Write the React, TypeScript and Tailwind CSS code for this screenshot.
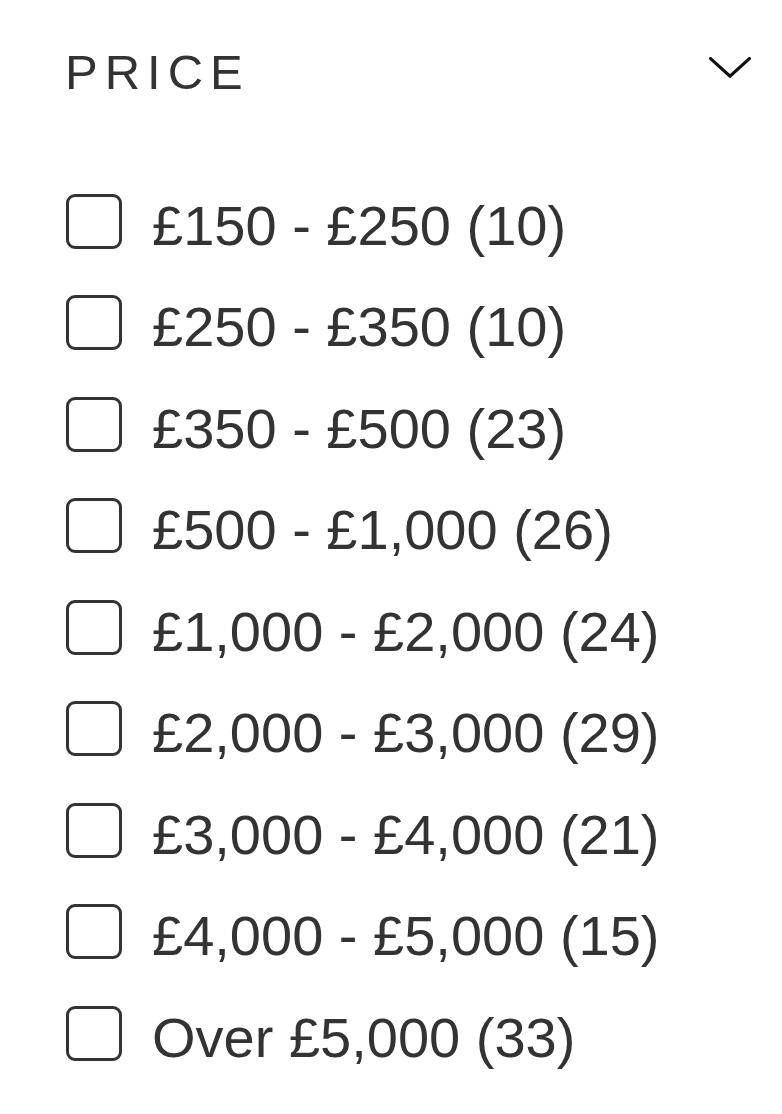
const ranges = [
  { label: '£150 - £250', count: 10 },
  { label: '£250 - £350', count: 10 },
  { label: '£350 - £500', count: 23 },
  { label: '£500 - £1,000', count: 26 },
  { label: '£1,000 - £2,000', count: 24 },
  { label: '£2,000 - £3,000', count: 29 },
  { label: '£3,000 - £4,000', count: 21 },
  { label: '£4,000 - £5,000', count: 15 },
  { label: 'Over £5,000', count: 33 },
];

function Chevron() {
  return (
    <svg width="42" height="21" viewBox="0 0 42 21" fill="none" className="mb-[9px]">
      <polyline
        points="1.6,1.6 21,19.2 40.4,1.6"
        stroke="#111111"
        strokeWidth="3.2"
        strokeLinecap="round"
        strokeLinejoin="miter"
      />
    </svg>
  );
}

export default function App() {
  return (
    <div className="min-h-[1114px] w-[782px] bg-white font-['Liberation_Sans',Arial,sans-serif] text-[#333333]">
      <section className="pl-[65px] pr-[31px] pt-[44px]">
        <button type="button" className="flex w-full items-center justify-between">
          <span className="text-[49px] leading-[56px] tracking-[7px]">PRICE</span>
          <Chevron />
        </button>
        <ul className="mt-[75px]">
          {ranges.map((r) => (
            <li key={r.label} className="flex h-[101.5px] items-center">
              <label className="flex items-center">
                <span className="mb-[9px] ml-[1px] h-[55px] w-[56px] shrink-0 rounded-[9px] border-[3.5px] border-[#333333] bg-white" />
                <span className="ml-[30px] text-[56px] leading-[64px]">
                  {r.label} ({r.count})
                </span>
              </label>
            </li>
          ))}
        </ul>
      </section>
    </div>
  );
}
